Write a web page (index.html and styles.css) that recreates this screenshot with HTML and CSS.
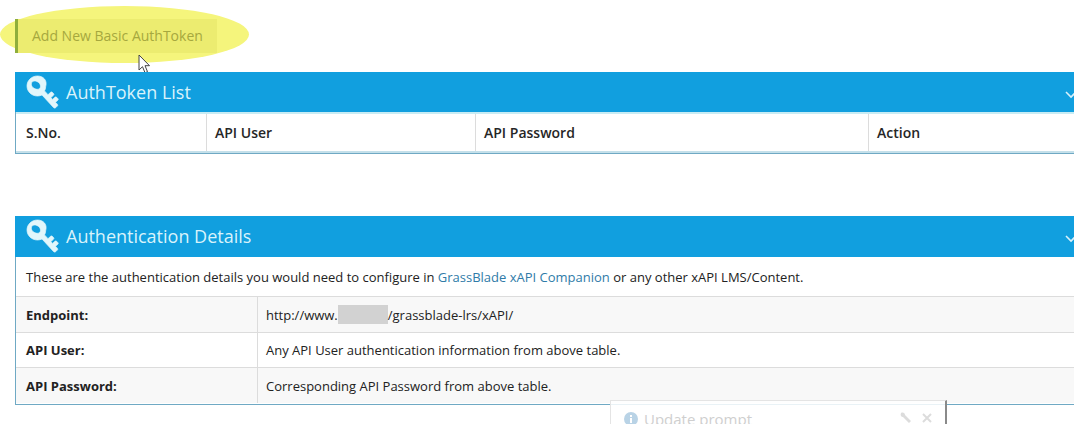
FILE: index.html
```html
<!DOCTYPE html>
<html lang="en">
<head>
<meta charset="utf-8">
<title>AuthTokens</title>
<link rel="stylesheet" href="styles.css">
</head>
<body>
<svg width="0" height="0" class="defs"><defs>
<symbol id="key" viewBox="0 0 34 34">
<path d="M11.500 1C5.500 1 1 5.500 1 11c0 5.500 4.500 10 10.500 10 1.700 0 3.200-.4 4.500-1l11.500 12.500c.7.800 1.600.8 2.300.1l1.500-1.500c.6-.6.6-1.300 0-1.900l-1.800-1.900 2.300-2.100c.6-.5.6-1.200 0-1.700l-1.200-1.200c-.5-.5-1.200-.5-1.700 0l-2.300 2.100-1.700-1.800 2.600-2.400c.5-.5.5-1.200 0-1.700l-1.200-1.200c-.5-.5-1.200-.5-1.700 0l-2.600 2.400-3.500-3.800c.8-1.300 1.200-2.800 1.200-4.400C21.500 5.500 17.500 1 11.500 1zM8.500 6c3 0 6 2.300 6 5.200 0 1.900-1.300 3.100-3.200 3.100-3 0-6-2.300-6-5.200C5.300 7.200 6.600 6 8.500 6z" fill-rule="evenodd"/>
</symbol>
</defs></svg>

<main class="page">
  <div class="highlight" aria-hidden="true"></div>
  <a class="add-btn" href="#">Add New Basic AuthToken</a>
  <svg class="cursor" width="13" height="20" viewBox="0 0 13 20"><path d="M1 1v15l3.500-3.300 2.500 6 2.500-1-2.500-6h4.500z" fill="#fff" stroke="#444" stroke-width="1"/></svg>

  <section class="panel panel-list">
    <header class="panel-head">
      <svg class="key"><use href="#key"/></svg>
      <h2>AuthToken List</h2>
      <svg class="chev" width="12" height="8" viewBox="0 0 12 8"><path d="M1 1l5 5 5-5" fill="none" stroke="#d8f1fb" stroke-width="1.600"/></svg>
    </header>
    <div class="token-row">
      <div class="tc c1">S.No.</div>
      <div class="tc c2">API User</div>
      <div class="tc c3">API Password</div>
      <div class="tc c4">Action</div>
    </div>
  </section>

  <section class="panel panel-details">
    <header class="panel-head tall">
      <svg class="key"><use href="#key"/></svg>
      <h2>Authentication Details</h2>
      <svg class="chev" width="12" height="8" viewBox="0 0 12 8"><path d="M1 1l5 5 5-5" fill="none" stroke="#d8f1fb" stroke-width="1.600"/></svg>
    </header>
    <p class="intro">These are the authentication details you would need to configure in <a href="#">GrassBlade xAPI Companion</a> or any other xAPI LMS/Content.</p>
    <div class="row shade h36"><div class="k">Endpoint:</div><div class="v">http://www.<span class="redact"></span>/grassblade-lrs/xAPI/</div></div>
    <div class="row h35"><div class="k">API User:</div><div class="v">Any API User authentication information from above table.</div></div>
    <div class="row shade h36"><div class="k">API Password:</div><div class="v">Corresponding API Password from above table.</div></div>
  </section>

  <aside class="prompt">
    <svg class="info" width="14" height="14" viewBox="0 0 14 14"><circle cx="7" cy="7" r="7" fill="#b9d3e6"/><rect x="6" y="6" width="2" height="5" fill="#fff"/><rect x="6" y="3" width="2" height="2" fill="#fff"/></svg>
    <span class="prompt-title">Update prompt</span>
    <svg class="tool" width="12" height="12" viewBox="0 0 12 12"><path d="M1 1c2-1 4 0 4 2l6 6-2 2-6-6C1 5 0 3 1 1z" fill="#dcdcdc"/></svg>
    <svg class="tool close" width="10" height="10" viewBox="0 0 10 10"><path d="M1 1l8 8M9 1l-8 8" stroke="#dcdcdc" stroke-width="2"/></svg>
  </aside>
</main>
</body>
</html>
```
FILE: styles.css
```css
* { box-sizing: border-box; }
html, body { margin: 0; height: 424px; overflow: hidden; background: #fff; }
body { font-family: "Open Sans", "Liberation Sans", sans-serif; font-size: 13px; color: #222; }
.defs { position: absolute; }
.page { position: relative; width: 1074px; height: 424px; overflow: hidden; padding: 19px 0 0 15px; }

.highlight { position: absolute; left: 0; top: 6px; width: 249px; height: 57px; border-radius: 50%; background: #f5f57c; }
.add-btn { position: relative; display: block; width: 202px; height: 34px; line-height: 33px; padding-left: 14px; font-size: 14px; color: #a6a83e; text-decoration: none; background: #ecec70; border-left: 3px solid #8fae3c; }
.cursor { position: absolute; left: 138px; top: 54px; }

.panel { position: relative; width: 1070px; border: 1px solid #6fa9c4; border-top: 0; border-right: 0; background: #fff; }
.panel-list { margin-top: 19px; height: 82px; }
.panel-details { margin-top: 62px; height: 189px; }
.panel-head { display: flex; align-items: center; height: 40px; margin-left: -1px; background: #119fdf; color: #d9f3fb; padding-left: 11px; }
.panel-head.tall { height: 41px; padding-bottom: 1px; }
.panel-head h2 { margin: 0 0 0 6px; font-size: 18px; font-weight: 400; }
.key { width: 34px; height: 34px; fill: #e2f6fb; stroke: #e2f6fb; stroke-width: .7; }
.chev { position: absolute; left: 1049px; top: 19px; }

.token-row { display: flex; height: 41px; border-top: 2px solid #c8ecf4; border-bottom: 2px solid #c5e0ea; font-size: 14px; font-weight: 600; color: #262626; }
.tc { display: flex; align-items: center; padding-left: 8px; border-right: 1px solid #dcdcdc; }
.c1 { width: 191px; padding-left: 10px; }
.c2 { width: 269px; }
.c3 { width: 393px; }
.c4 { flex: 1; border-right: 0; }

.intro { margin: 0; height: 39px; line-height: 40px; padding-left: 10px; font-size: 13px; }
.intro a { color: #2f7ba8; text-decoration: none; }
.row { display: flex; border-top: 1px solid #dcdcdc; font-size: 13px; }
.h36 { height: 36px; }
.h35 { height: 35px; }
.shade { background: #f8f8f8; }
.k, .v { display: flex; align-items: center; }
.k { width: 242px; padding-left: 10px; font-weight: 700; border-right: 1px solid #dcdcdc; }
.v { padding-left: 8px; flex: 1; white-space: pre; }
.redact { display: inline-block; width: 50px; height: 19px; background: #d2d2d2; }

.prompt { position: absolute; left: 610px; top: 400px; width: 337px; height: 30px; display: flex; align-items: flex-start; padding: 11px 0 0 13px; background: rgba(255,255,255,.85); border: 1px solid #e4e4e4; border-right: 2px solid #8a8a8a; border-bottom: 0; color: #cfcfcf; }
.info { flex: none; }
.prompt-title { margin-left: 6px; font-size: 15px; line-height: 14px; white-space: nowrap; }
.tool { flex: none; margin-left: auto; margin-top: 0; }
.tool.close { margin: 1px 13px 0 10px; }
```
